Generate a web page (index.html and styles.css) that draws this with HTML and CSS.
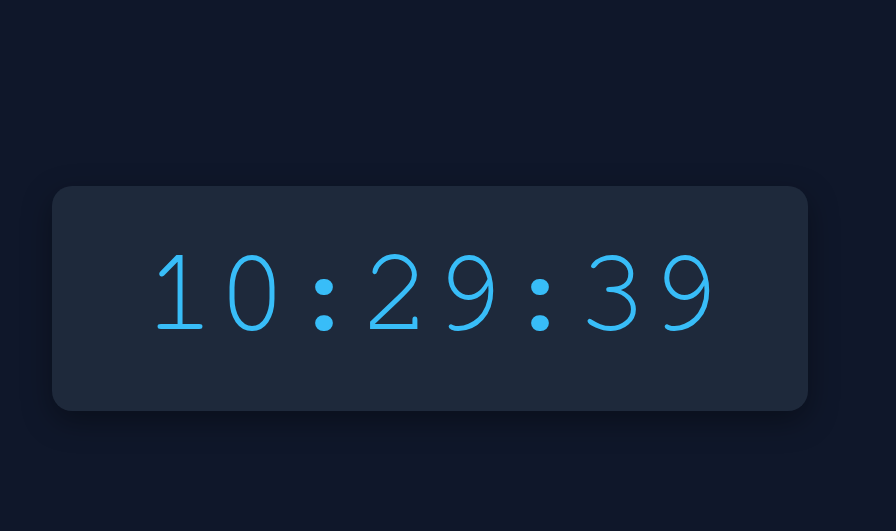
FILE: index.html
```html
<!DOCTYPE html>
<html lang="en">
<head>
<meta charset="utf-8">
<title>Clock</title>
<link rel="stylesheet" href="styles.css">
</head>
<body>
<main class="page">
  <div class="clock">
    <span class="time">10:29:39</span>
  </div>
</main>
</body>
</html>
```

FILE: styles.css
```css
html, body {
  margin: 0;
  padding: 0;
  background: #0f172a;
}
.page {
  min-height: 531px;
  box-sizing: border-box;
  padding: 186px 0 0 52px;
}
.clock {
  width: 756px;
  height: 225px;
  box-sizing: border-box;
  padding: 0 0 12px 4px;
  background: #1e293b;
  border-radius: 20px;
  box-shadow: 0 10px 30px rgba(0, 0, 0, 0.35);
  display: flex;
  align-items: center;
  justify-content: center;
}
.time {
  font-family: "FreeMono", "Courier New", monospace;
  font-size: 120px;
  line-height: normal;
  color: #38bdf8;
}
```
